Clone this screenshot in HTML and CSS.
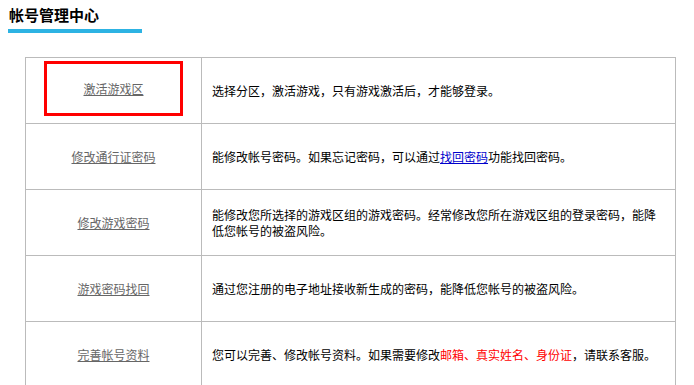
FILE: index.html
```html
<!DOCTYPE html>
<html lang="zh-CN">
<head>
  <meta charset="UTF-8" />
  <title>帐号管理中心</title>
  <link rel="stylesheet" href="styles.css">
</head>
<body>
  <div class="page">
    <h2 class="title">帐号管理中心</h2>
    <div class="title-bar"></div>

    <table class="menu">
      <tr>
        <td class="name name-top">
          <div class="pick"><a href="#">激活游戏区</a></div>
        </td>
        <td class="desc">选择分区，激活游戏，只有游戏激活后，才能够登录。</td>
      </tr>
      <tr>
        <td class="name"><a href="#">修改通行证密码</a></td>
        <td class="desc">能修改帐号密码。如果忘记密码，可以通过<a class="blue" href="#">找回密码</a>功能找回密码。</td>
      </tr>
      <tr>
        <td class="name"><a href="#">修改游戏密码</a></td>
        <td class="desc">能修改您所选择的游戏区组的游戏密码。经常修改您所在游戏区组的登录密码，能降低您帐号的被盗风险。</td>
      </tr>
      <tr>
        <td class="name"><a href="#">游戏密码找回</a></td>
        <td class="desc">通过您注册的电子地址接收新生成的密码，能降低您帐号的被盗风险。</td>
      </tr>
      <tr>
        <td class="name"><a href="#">完善帐号资料</a></td>
        <td class="desc">您可以完善、修改帐号资料。如果需要修改<span class="red">邮箱、真实姓名、身份证</span>，请联系客服。</td>
      </tr>
    </table>
  </div>
</body>
</html>
```

FILE: styles.css
```css
body {
  margin: 0;
  background: #fff;
  color: #000;
  font-family: "Noto Sans CJK SC", "DejaVu Sans", sans-serif;
  font-size: 12px;
}
.page {
  padding: 0 8px;
}
.title {
  margin: 0;
  padding: 4px 0 0 1px;
  height: 22px;
  line-height: 22px;
  font-size: 15px;
  font-weight: bold;
}
.title-bar {
  width: 134px;
  height: 4px;
  margin-top: 3px;
  background: #2db3e3;
}
.menu {
  width: 651px;
  margin: 24px 0 0 17px;
  border-collapse: collapse;
}
.menu tr {
  height: 66px;
}
.menu td {
  border: 1px solid #bbb;
  padding: 0 10px;
  line-height: 16px;
}
.name {
  width: 155px;
  text-align: center;
}
.name a {
  color: #666;
}
.name-top {
  vertical-align: top;
  padding: 0;
}
.pick {
  width: 133px;
  height: 49px;
  margin: 3px auto 0;
  border: 3px solid #f00;
  display: flex;
  align-items: center;
  justify-content: center;
}
.blue {
  color: #0000cc;
}
.red {
  color: #f00;
}
```
